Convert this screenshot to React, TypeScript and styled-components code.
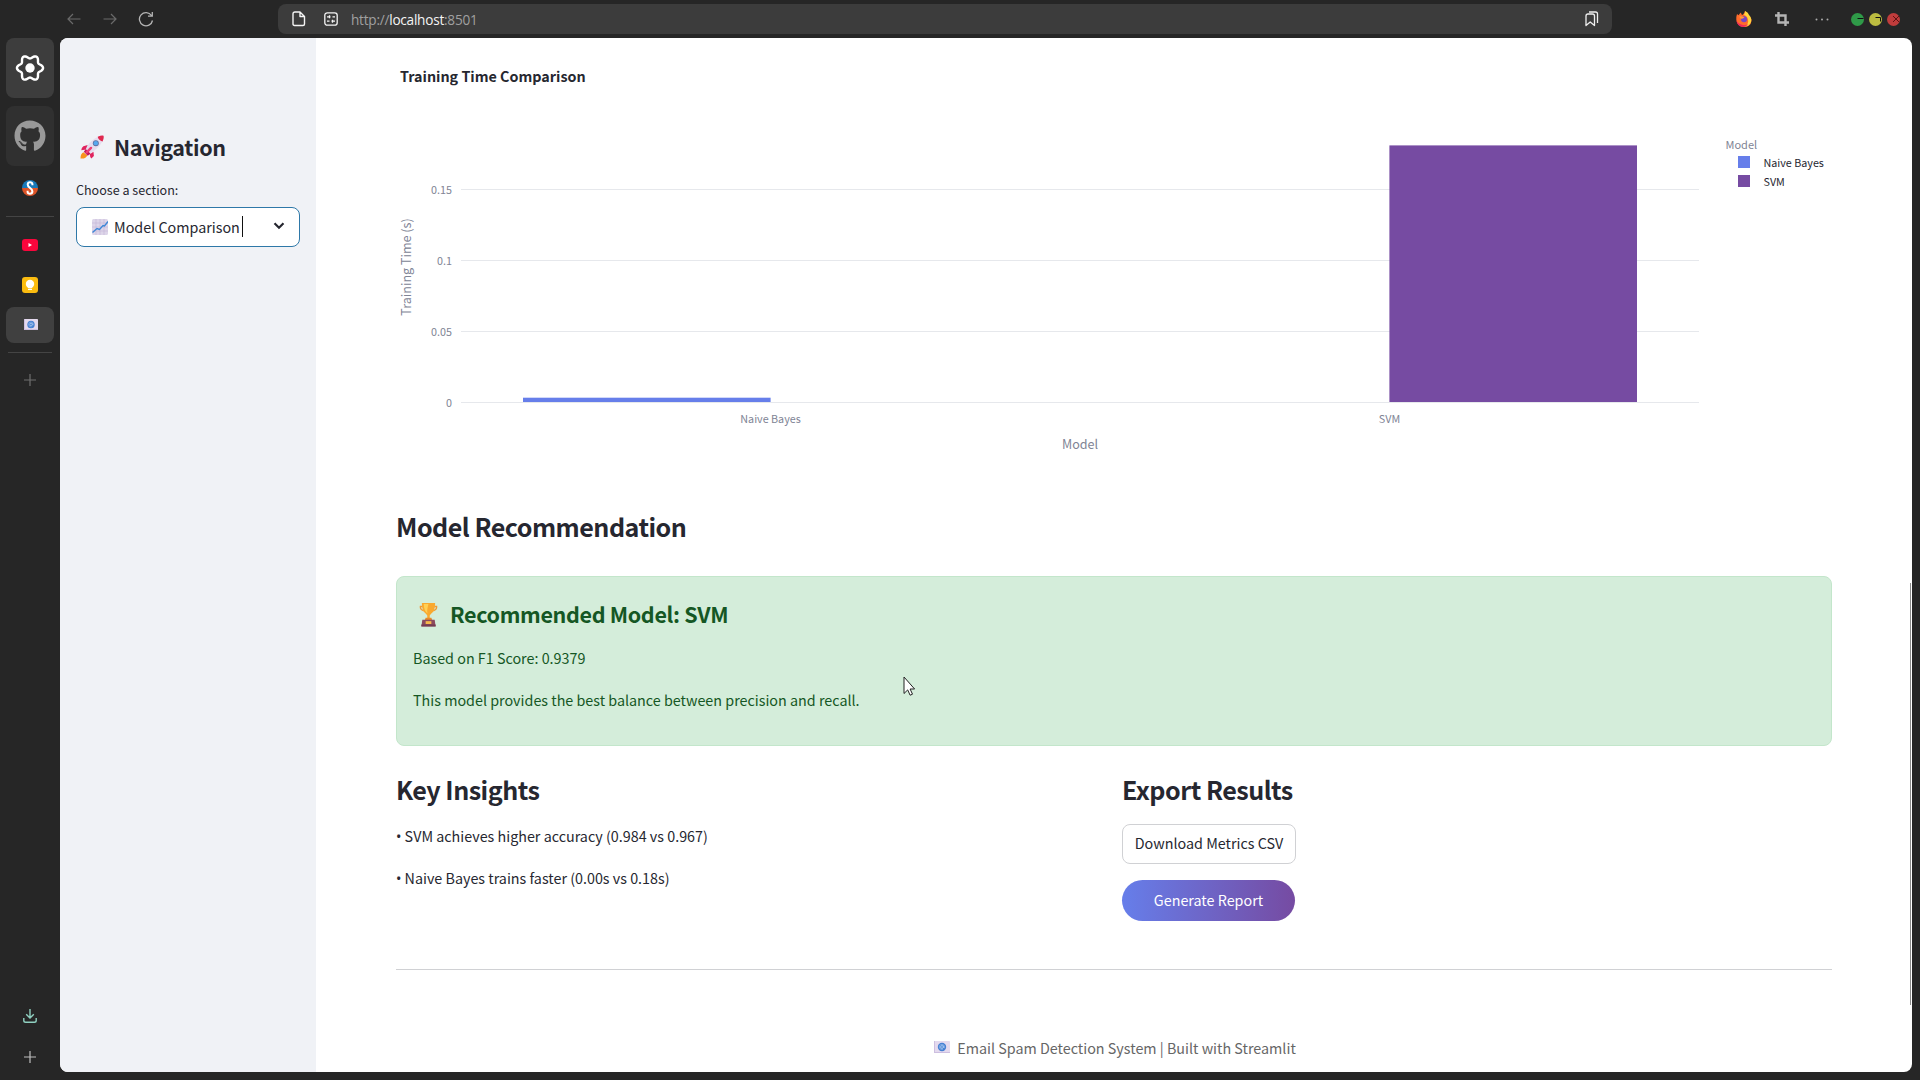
import React from "react";
import styled, { createGlobalStyle } from "styled-components";
import { FaGithub } from "react-icons/fa";

const sans = `"Noto Sans CJK SC", "Noto Sans", sans-serif`;

const Global = createGlobalStyle`
  * { box-sizing: border-box; }
  body { margin: 0; background: #262626; font-family: ${sans}; overflow: hidden; }
  h2, h3, p { margin: 0; }
`;

const Window = styled.div`
  width: 1920px;
  height: 1080px;
  display: grid;
  grid-template-rows: 38px 1fr;
  background: #262626;
`;

const Toolbar = styled.header`
  display: flex;
  align-items: flex-start;
  padding: 0 16px 0 56px;
`;

const Slot = styled.span<{ $w: number }>`
  width: ${(p) => p.$w}px;
  height: 38px;
  display: flex;
  align-items: center;
  justify-content: center;
  flex: none;
`;

const AddressBar = styled.div`
  width: 1334px;
  height: 30px;
  margin: 4px 112px 0 114px;
  padding: 0 4px 0 5px;
  display: flex;
  align-items: center;
  background: #3c3c3c;
  border-radius: 8px;
`;

const Url = styled.span`
  flex: 1;
  margin-left: 4px;
  padding-top: 1px;
  font: 13.6px/20px "Open Sans", "Noto Sans", sans-serif;
  letter-spacing: -0.24px;
  color: #a0a0a0;
  b { font-weight: 400; color: #f4f4f4; }
`;

const Dots = styled.div`
  display: flex;
  gap: 5px;
  margin: 13px 0 0 7px;
`;

const Body = styled.div`
  display: grid;
  grid-template-columns: 60px 1852px;
  height: 1034px;
`;

const Rail = styled.nav`
  display: flex;
  flex-direction: column;
  align-items: center;
`;

const Tile = styled.div<{ $h: number; $bg: string; $mt?: number }>`
  width: 48px;
  height: ${(p) => p.$h}px;
  margin-top: ${(p) => p.$mt ?? 0}px;
  background: ${(p) => p.$bg};
  border-radius: 8px;
  display: flex;
  align-items: center;
  justify-content: center;
`;

const RailItem = styled.div<{ $h: number }>`
  height: ${(p) => p.$h}px;
  display: flex;
  align-items: center;
  justify-content: center;
`;

const TabIcon = styled.div`
  padding: 0 0 1px 2px;
  display: flex;
`;

const RailRule = styled.div<{ $w: number }>`
  width: ${(p) => p.$w}px;
  height: 1px;
  background: #444;
`;

const Spacer = styled.div`
  flex: 1;
`;

const Page = styled.div`
  position: relative;
  display: grid;
  grid-template-columns: 256px 1fr;
  background: #fff;
  border-radius: 8px;
  overflow: hidden;
`;

const Sidebar = styled.aside`
  background: #f0f2f6;
  padding: 91px 16px 0;
`;

const NavTitle = styled.h2`
  display: flex;
  align-items: center;
  height: 36px;
  padding-left: 4px;
  gap: 10px;
  font-size: 21.5px;
  line-height: 36px;
  font-weight: 600;
  letter-spacing: -0.35px;
  color: #262730;
`;

const Label = styled.div`
  margin-top: 15px;
  height: 20px;
  font-size: 12.55px;
  line-height: 20px;
  color: #262730;
`;

const Select = styled.div`
  margin-top: 7px;
  height: 40px;
  padding: 0 14px 2px 15px;
  display: flex;
  align-items: center;
  background: #fff;
  border: 1px solid #2e78a8;
  border-radius: 8px;
  font-size: 14.33px;
  color: #262730;
  svg:first-child { margin: 2px 6px 0 0; }
  svg:last-child { margin-left: auto; }
`;

const Caret = styled.span`
  width: 1px;
  height: 21px;
  margin-left: 2px;
  background: #111;
`;

const Main = styled.main`
  padding: 0 80px;
  display: flex;
  flex-direction: column;
`;

const Heading = styled.h2<{ $h: number; $mt: number }>`
  height: ${(p) => p.$h}px;
  margin-top: ${(p) => p.$mt}px;
  line-height: ${(p) => p.$h}px;
  font-size: 25.08px;
  font-weight: 600;
  letter-spacing: -0.5px;
  color: #262730;
`;

const Callout = styled.section`
  margin-top: 31px;
  height: 170px;
  padding: 19px 16px 0;
  border: 1px solid #c3e6cb;
  border-radius: 8px;
  background: #d4edda;
  color: #155724;
`;

const CalloutTitle = styled.h3`
  display: flex;
  align-items: center;
  height: 36px;
  padding-left: 6px;
  gap: 12px;
  font-size: 21.5px;
  line-height: 36px;
  font-weight: 600;
  letter-spacing: -0.34px;
`;

const Text = styled.p<{ $mt?: number }>`
  margin-top: ${(p) => p.$mt ?? 0}px;
  font-size: 14.33px;
  line-height: 26px;
`;

const Bullet = styled.span`
  font-family: "Noto Sans", sans-serif;
  line-height: 1;
`;

const Columns = styled.div`
  margin-top: 25px;
  display: grid;
  grid-template-columns: 710px 710px;
  gap: 16px;
  height: 198px;
  color: #262730;
`;

const Column = styled.div`
  display: flex;
  flex-direction: column;
  align-items: flex-start;
`;

const Button = styled.button<{ $primary?: boolean }>`
  width: ${(p) => (p.$primary ? 173 : 174)}px;
  height: ${(p) => (p.$primary ? 41 : 40)}px;
  margin-top: ${(p) => (p.$primary ? 16 : 15)}px;
  padding: 0 0 2px;
  border: ${(p) => (p.$primary ? "none" : "1px solid #d0d1d4")};
  border-radius: ${(p) => (p.$primary ? 25 : 8)}px;
  background: ${(p) => (p.$primary ? "linear-gradient(90deg, #667eea, #764ba2)" : "#fff")};
  color: ${(p) => (p.$primary ? "#fff" : "#262730")};
  font-family: ${sans};
  font-size: 14.33px;
  line-height: 36px;
  white-space: nowrap;
`;

const Rule = styled.hr`
  width: 100%;
  height: 1px;
  margin: 0;
  border: 0;
  background: #d0d1d4;
`;

const Footer = styled.footer`
  margin-top: 64px;
  padding-left: 2px;
  display: flex;
  justify-content: center;
  align-items: center;
  gap: 7px;
  height: 26px;
  font-size: 14.33px;
  color: #666;
`;

const ScrollThumb = styled.div`
  position: absolute;
  right: 1px;
  top: 545px;
  width: 1px;
  height: 422px;
  background: #8c8c8c;
`;

const Pointer = styled.svg`
  position: absolute;
  left: 843px;
  top: 638px;
`;

const ticks = [
  { label: "0.15", y: 151 },
  { label: "0.1", y: 222 },
  { label: "0.05", y: 293 },
  { label: "0", y: 364 },
];

const ChartSvg = styled.svg`
  display: block;
  flex: none;
  font-family: ${sans};
  fill: #808495;
`;

function Chart() {
  return (
    <ChartSvg width="1436" height="472" viewBox="0 0 1436 472">
      <text x="4" y="44" fontSize="14.33" fontWeight="700" fill="#262730">Training Time Comparison</text>
      {ticks.map((t) => (
        <g key={t.label}>
          <rect x="65" y={t.y} width="1238" height="1" fill="#e6e8ec" />
          <text x="56" y={t.y + 4.5} fontSize="10.75" textAnchor="end">{t.label}</text>
        </g>
      ))}
      <rect x="127" y="359.7" width="247.6" height="4.3" fill="#667eea" />
      <rect x="993.4" y="107.4" width="247.6" height="256.6" fill="#764ba2" />
      <text x="374.5" y="385" fontSize="10.75" textAnchor="middle">Naive Bayes</text>
      <text x="993.5" y="385" fontSize="10.75" textAnchor="middle">SVM</text>
      <text x="684" y="411" fontSize="12.55" textAnchor="middle">Model</text>
      <text transform="translate(15 229) rotate(-90)" fontSize="12.55" textAnchor="middle">Training Time (s)</text>
      <text x="1329.500" y="110.500" fontSize="11">Model</text>
      <rect x="1342" y="118" width="12" height="12" fill="#667eea" />
      <rect x="1342" y="137" width="12" height="12" fill="#764ba2" />
      <g fontSize="10.75" fill="#262730">
        <text x="1367.500" y="129">Naive Bayes</text>
        <text x="1367.500" y="148">SVM</text>
      </g>
    </ChartSvg>
  );
}

const flower = (() => {
  let d = "";
  for (let i = 0; i < 120; i++) {
    const a = (i / 120) * Math.PI * 2;
    const r = 11.3 + 1.75 * Math.cos(6 * a);
    d += `${i ? "L" : "M"}${(15 + r * Math.cos(a)).toFixed(2)} ${(15 + r * Math.sin(a)).toFixed(2)}`;
  }
  return d + "Z";
})();

const FlowerIcon = () => (
  <svg width="30" height="30">
    <path d={flower} fill="none" stroke="#fff" strokeWidth="2.4" />
    <circle cx="15" cy="15" r="4.7" fill="#fff" />
  </svg>
);

const PlusIcon = ({ color }: { color: string }) => (
  <svg width="12" height="12" stroke={color} strokeWidth="1.2"><path d="M6 0v12M0 6h12" /></svg>
);

const MailIcon = ({ w = 16, h = 12 }: { w?: number; h?: number }) => (
  <svg width={w} height={h} viewBox="0 0 16 12" preserveAspectRatio="none">
    <rect width="16" height="12" rx=".8" fill="#e4d9ee" />
    <path d="M0 0h1v12H0zM0 11h16v1H0z" fill="#cdbfe0" />
    <circle cx="8" cy="6" r="4.2" fill="#4580d2" />
    <circle cx="8" cy="6" r="1.4" fill="none" stroke="#c5dcf8" strokeWidth=".7" />
    <path d="M9.500 4.600v2q.5.9 1.100 0Q10.900 3.600 8 3.300 5.100 3.600 5.200 6q.3 2.700 3.600 2.600" fill="none" stroke="#b2cdf3" strokeWidth=".5" />
  </svg>
);

const RocketIcon = () => (
  <svg width="24" height="24" viewBox="0 0 25 25">
    <path d="M.5 24.500q0-5 3-6.500l4 3q-1 4-7 3.500z" fill="#f7941d" />
    <path d="M8 10.500l-4.500 1.300Q1.500 13.500 1.300 16l5.500-1zM14 17.500l.5 4.500-2.700 2.500q-1.500-1-1.500-4.500z" fill="#e0245e" />
    <path d="M5.500 16.500Q8 7 19 1.500q3-1.200 5.500-.8.500 2.800-1 5.800-5 9-14.500 13z" fill="#e6dcee" />
    <path d="M18.500 1.700q4-1.600 6-1 .7 2.800-1 6-2-.3-3.600-1.900-1.200-1.400-1.400-3.100z" fill="#e0294f" />
    <circle cx="16.500" cy="8.500" r="3.100" fill="#5a6f9d" />
    <circle cx="16.500" cy="8.500" r="2.300" fill="#56a8ee" />
    <path d="M4 17.500l2-3 5 5-3 2z" fill="#c2185b" />
    <path d="M7 18l4.500-4.500" stroke="#ee3f74" strokeWidth="2.500" strokeLinecap="round" />
  </svg>
);

const GraphIcon = () => (
  <svg width="16" height="16" viewBox="0 0 16 16">
    <rect width="16" height="16" rx="1.5" fill="#ddd5e9" />
    <path d="M4 0v16M8 0v16M12 0v16M0 4h16M0 8h16M0 12h16" stroke="#c3b6d6" strokeWidth=".6" />
    <path d="M.500 13.500l4.500-4 2.500 1L11 6.500l1.500.5L16 2.500" fill="none" stroke="#3f87d6" strokeWidth="1.400" />
  </svg>
);

const TrophyIcon = () => (
  <svg width="19" height="25" viewBox="0 0 20 26">
    <path d="M4 4.500H1.500Q1 8 5 9M16 4.500h2.500Q19 8 15 9" fill="none" stroke="#f09a35" strokeWidth="1.500" />
    <path d="M3 1h14q0 9-4.500 11.500L11.300 14v4H8.700v-4l-1.200-1.500Q3 10 3 1z" fill="#f9a92f" />
    <path d="M5 2h5q-2 7-1 10-4-3-4-10z" fill="#ffcf55" />
    <path d="M7 16.500h6l1 2.500H6z" fill="#e88a2a" />
    <path d="M3.500 18.500h13l1 7h-15z" fill="#8c4a5e" />
    <path d="M2.500 23.500h15v2h-15z" fill="#743c50" />
    <rect x="7" y="20" width="6" height="3" fill="#f7b84a" />
  </svg>
);

export default function App() {
  return (
    <>
      <Global />
      <Window>
        <Toolbar>
          <Slot $w={36}>
            <svg width="14" height="12" fill="none" stroke="#6a6a6a" strokeWidth="1.200"><path d="M13.500 6H1M6 1L1 6l5 5" /></svg>
          </Slot>
          <Slot $w={36}>
            <svg width="14" height="12" fill="none" stroke="#6a6a6a" strokeWidth="1.200"><path d="M.500 6H13M8 1l5 5-5 5" /></svg>
          </Slot>
          <Slot $w={36}>
            <svg width="16" height="16" fill="none" stroke="#b4b4b4" strokeWidth="1.300"><path d="M14.500 9.500A6.600 6.600 0 1 1 13.500 4.500M14.300 1v4.200H10" /></svg>
          </Slot>
          <AddressBar>
            <Slot $w={32}>
              <svg width="14" height="16" fill="none" stroke="#f4f4f4" strokeWidth="1.400" strokeLinejoin="round"><path d="M1 3q0-2 2-2h5l4.500 4.500V13q0 1.500-1.500 1.500H2.500Q1 14.500 1 13zM8 1v4.500h4.500" /></svg>
            </Slot>
            <Slot $w={32}>
              <svg width="14" height="14" fill="none" stroke="#f4f4f4" strokeWidth="1.300"><rect x=".8" y=".8" width="12.400" height="12.400" rx="2.500" /><path d="M3 4.800h3.500M8.500 4.800H11M3 9.200h2.500M7.500 9.200H11M5.500 3.300v3M8.500 7.700v3" /></svg>
            </Slot>
            <Url>http://<b>localhost</b>:8501</Url>
            <Slot $w={32}>
              <svg width="14" height="16" fill="none" stroke="#eee" strokeWidth="1.300" strokeLinejoin="round"><path d="M1 5q0-2 2-2h4.500q2 0 2 2v9.500L5.200 11 1 14.500zM4 1h6.500q2 0 2 2v9" /></svg>
            </Slot>
          </AddressBar>
          <Slot $w={40}>
            <svg width="16" height="16" viewBox="0 0 16 16">
              <path d="M1 3l1.500 1.200Q4 2 5 1.500q0 2 1.500 2.500Q8.500 2.500 9 0q2 1 3 3.500 4 3.500 3.500 6.500-1 6-7.500 6T.3 9Q0 6 1 3z" fill="#ff6b2c" />
              <path d="M9 0q3.500 1.500 4 4 3 3 2 7-1.500 4-6 4.500 4-3 3-7T8 4q1-2 1-4z" fill="#ffd43c" />
              <path d="M.3 9q1 3 5 4.500t7-.5q-2 3-5 3Q1 15.500.3 9z" fill="#f0295c" />
              <circle cx="8" cy="8.300" r="3" fill="#7544c4" />
              <path d="M3 5.500q3-1 5.500 1-2 1.500-3.500 1.200z" fill="#ff9a34" />
            </svg>
          </Slot>
          <Slot $w={36}>
            <svg width="14" height="14" fill="none" stroke="#b4b4b4" strokeWidth="2.400"><path d="M3.500 0v10.500H14M0 3.500h10.500V14" /></svg>
          </Slot>
          <Slot $w={44}>
            <svg width="14" height="3" fill="#aaa"><circle cx="1.500" cy="1.500" r="1" /><circle cx="7" cy="1.500" r="1" /><circle cx="12.500" cy="1.500" r="1" /></svg>
          </Slot>
          <Dots>
            <svg width="13" height="13"><circle cx="6.500" cy="6.500" r="6.500" fill="#2f9a48" /><path d="M6.500 5.500h6" stroke="#111" /></svg>
            <svg width="13" height="13"><circle cx="6.500" cy="6.500" r="6.500" fill="#bcbc40" /><path d="M6.500 4.500h5v4" fill="none" stroke="#111" /></svg>
            <svg width="13" height="13"><circle cx="6.500" cy="6.500" r="6.500" fill="#c03c3c" /><path d="M6 3l6 6M12 3L6 9" stroke="#5c1212" /></svg>
          </Dots>
        </Toolbar>
        <Body>
          <Rail>
            <Tile $h={60} $bg="#3d3d3d"><FlowerIcon /></Tile>
            <Tile $h={60} $bg="#303030" $mt={8}><FaGithub size={32} color="#999" /></Tile>
            <RailItem $h={44}>
              <svg width="16" height="16" viewBox="0 0 16 16">
                <path d="M0 8a8 8 0 0 1 16 0z" fill="#1779ba" />
                <path d="M0 8a8 8 0 0 0 16 0z" fill="#dc5428" />
                <path d="M10.400 5.200V4Q10.200 2.200 8 2.200T5.700 4.500Q5.700 6.500 8 7.900t2.400 3.500Q10.300 13.700 8 13.700T5.600 12v-1.200" fill="none" stroke="#fff" strokeWidth="2" />
              </svg>
            </RailItem>
            <RailItem $h={12}><RailRule $w={48} /></RailItem>
            <RailItem $h={46}>
              <svg width="16" height="12"><rect width="16" height="12" rx="3" fill="#f9063c" /><path d="M6.500 4v4L10 6z" fill="#fff" /></svg>
            </RailItem>
            <RailItem $h={34}>
              <svg width="16" height="16"><rect width="16" height="16" rx="3" fill="#fbbc10" /><circle cx="8" cy="7" r="4.200" fill="#fff" /><path d="M6 9h4v2H6zM6 11.800h4v1.300H6z" fill="#fff" /></svg>
            </RailItem>
            <Tile $h={36} $bg="#404040" $mt={5}><TabIcon><MailIcon w={14} h={11} /></TabIcon></Tile>
            <RailItem $h={18}><RailRule $w={44} /></RailItem>
            <RailItem $h={38}><PlusIcon color="#6e6e6e" /></RailItem>
            <Spacer />
            <RailItem $h={52}>
              <svg width="14" height="14" fill="none" stroke="#8fd0c0" strokeWidth="1.400"><path d="M7 0v9M3.200 5.300L7 9l3.800-3.700M.800 9v2.500q0 1.800 1.800 1.800h8.800q1.800 0 1.800-1.800V9" /></svg>
            </RailItem>
            <RailItem $h={30}><PlusIcon color="#bdbdbd" /></RailItem>
          </Rail>
          <Page>
            <Sidebar>
              <NavTitle><RocketIcon />Navigation</NavTitle>
              <Label>Choose a section:</Label>
              <Select>
                <GraphIcon />
                Model Comparison
                <Caret />
                <svg width="12" height="8" fill="none" stroke="#262730" strokeWidth="2.200"><path d="M1.500 1.300L6 5.800l4.500-4.500" /></svg>
              </Select>
            </Sidebar>
            <Main>
              <Chart />
              <Heading $h={38} $mt={-3}>Model Recommendation</Heading>
              <Callout>
                <CalloutTitle><TrophyIcon />Recommended Model: SVM</CalloutTitle>
                <Text $mt={13}>Based on F1 Score: 0.9379</Text>
                <Text $mt={16}>This model provides the best balance between precision and recall.</Text>
              </Callout>
              <Columns>
                <Column>
                  <Heading $h={40} $mt={-2}>Key Insights</Heading>
                  <Text $mt={14}><Bullet>•</Bullet> SVM achieves higher accuracy (0.984 vs 0.967)</Text>
                  <Text $mt={16}><Bullet>•</Bullet> Naive Bayes trains faster (0.00s vs 0.18s)</Text>
                </Column>
                <Column>
                  <Heading $h={40} $mt={-2}>Export Results</Heading>
                  <Button>Download Metrics CSV</Button>
                  <Button $primary>Generate Report</Button>
                </Column>
              </Columns>
              <Rule />
              <Footer><MailIcon />Email Spam Detection System | Built with Streamlit</Footer>
            </Main>
            <ScrollThumb />
            <Pointer width="12" height="20" viewBox="0 0 12 20">
              <path d="M1 1v16.500l3.700-3.600 2.400 5.300 2.400-1-2.400-5.200h4.500z" fill="#fff" stroke="#222" />
            </Pointer>
          </Page>
        </Body>
      </Window>
    </>
  );
}
